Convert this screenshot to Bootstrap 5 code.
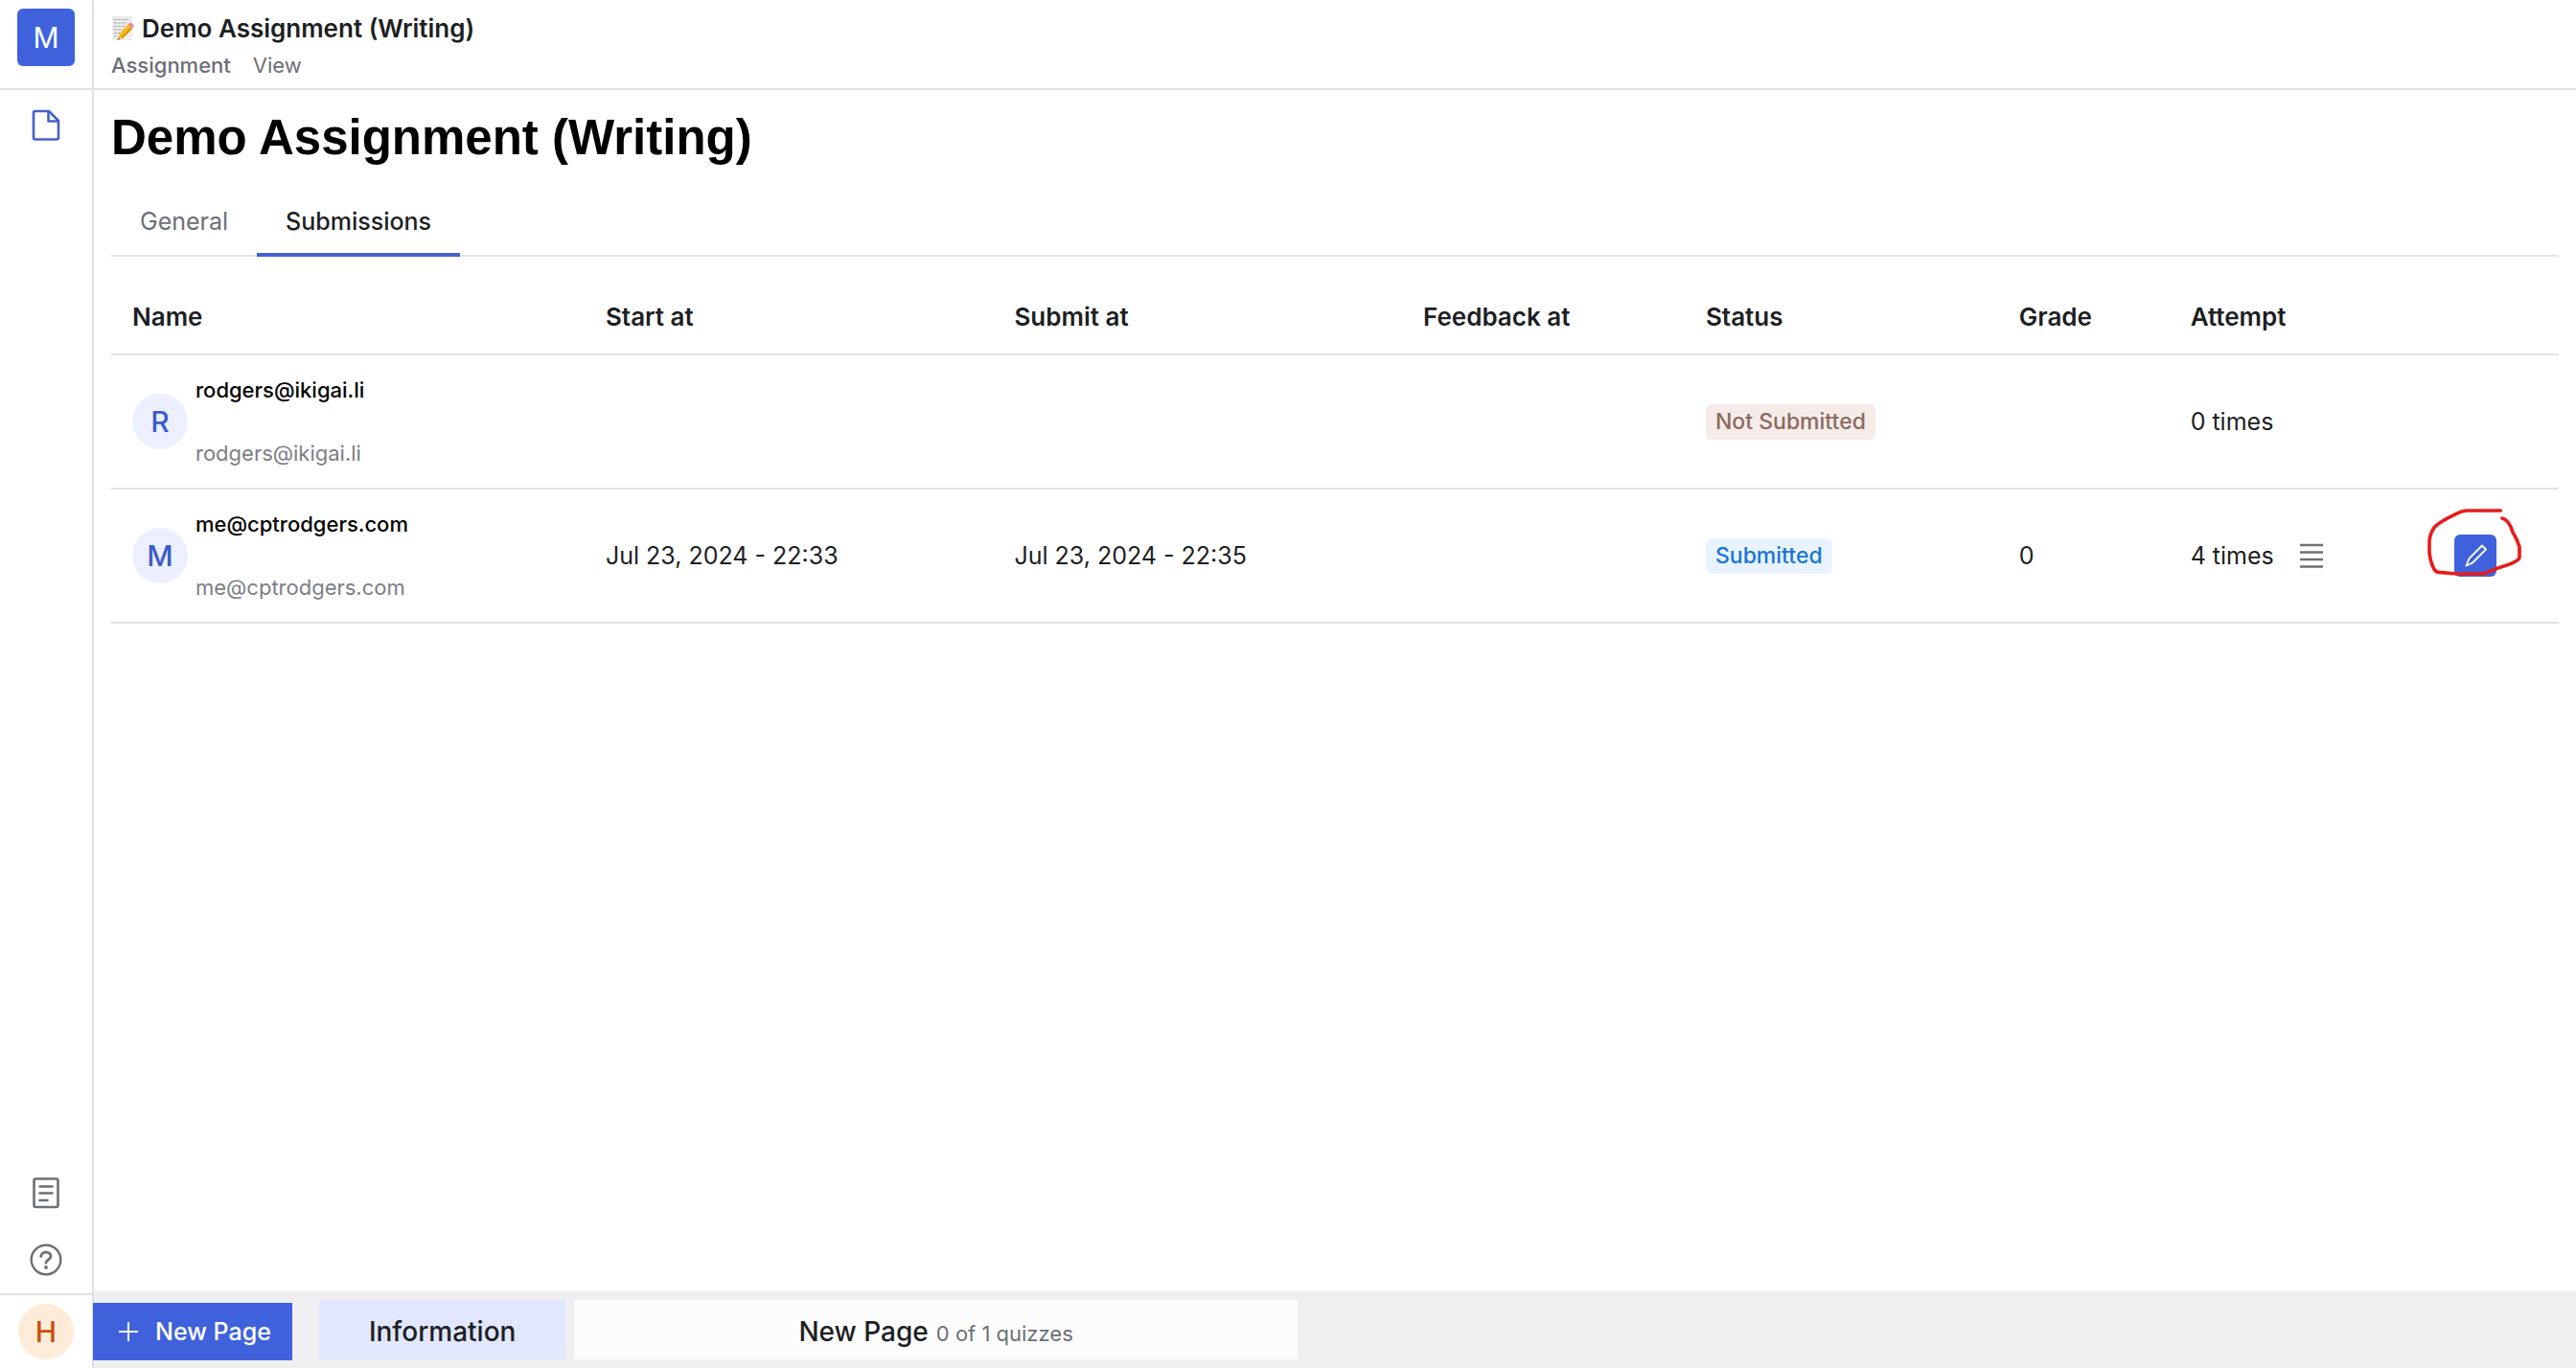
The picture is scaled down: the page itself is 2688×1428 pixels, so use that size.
<!DOCTYPE html>
<html lang="en">
<head>
<meta charset="utf-8">
<meta name="viewport" content="width=device-width, initial-scale=1">
<title>Demo Assignment (Writing)</title>
<link href="https://cdn.jsdelivr.net/npm/bootstrap@5.3.0/dist/css/bootstrap.min.css" rel="stylesheet">
<style>
  :root { --ink: #1c1f23; --muted-ink: #6b6f78; --line: #dfdfe6; --brand: #3f62dc; }
  body { font-family: Inter, "Noto Sans", sans-serif; font-size: 25px; line-height: 36px; color: var(--ink); background: #fff; }
  a { color: inherit; text-decoration: none; }
  svg { display: block; flex: none; }
  .side-rail { width: 98px; border-right: 2px solid var(--line); }
  .rail-head { height: 94px; padding-top: 9px; border-bottom: 2px solid var(--line); }
  .rail-foot { height: 78px; padding-top: 9px; border-top: 2px solid var(--line); }
  .rail-links { gap: 36px; padding-bottom: 18px; }
  .logo-tile, .user-dot { font-size: 30px; display: flex; align-items: center; justify-content: center; flex: none; }
  .logo-tile { width: 60px; height: 60px; background: var(--brand); color: #fff; border-radius: 6px; }
  .user-dot { width: 58px; height: 58px; border-radius: 50%; background: #ecf0fe; color: #3b5bcb; font-weight: 500; }
  .user-dot.warm { background: #feecd9; color: #cc4e0b; }
  .top-bar { height: 94px; padding: 12px 18px 0; border-bottom: 2px solid var(--line); }
  .doc-name { font-size: 26px; font-weight: 600; gap: 8px; }
  .doc-menu { font-size: 22px; line-height: 32px; gap: 23px; color: var(--muted-ink); padding-top: 4px; }
  .page-body { padding: 20px 18px 0; }
  h1 { font: bold 51px/60px "Liberation Sans", Arial, sans-serif; color: #000; margin: 0; }
  .nav-tabs { border-bottom: 2px solid #e4e5e8; margin: 20px 0 24px; --bs-nav-tabs-border-width: 0px; }
  .nav-tabs .nav-link { border: 0; border-bottom: 4px solid transparent; border-radius: 0; margin-bottom: -2px; padding: 21px 30px 17px; height: 74px; line-height: 32px; color: var(--muted-ink); }
  .nav-tabs .nav-link.active { color: var(--ink); font-weight: 500; border-bottom-color: #4562d0; background: none; }
  .table { table-layout: fixed; --bs-table-color: var(--ink); color: var(--ink); border-color: #e0e0e6; }
  .table > :not(caption) > * > * { padding: 0 22px; border-bottom: 2px solid #e2e2e8; vertical-align: middle; }
  .table th { height: 78px; font-size: 26px; font-weight: 600; }
  .table td { height: 140px; }
  .who { font-size: 22px; line-height: 32px; gap: 34px; }
  .who span:first-child { color: #000; font-weight: 500; }
  .who span:last-child { color: #7b7e87; }
  .tag { display: inline-block; font-size: 23px; line-height: 37px; padding: 0 10px; border-radius: 6px; font-weight: 500; }
  .tag-idle { background: #f5ece9; color: #8a6a60; }
  .tag-done { background: #e8f3ff; color: #1676d8; }
  .edit-btn { width: 44px; height: 44px; border: 0; border-radius: 6px; background: var(--brand); padding: 0; }
  .plain-btn { border: 0; background: none; padding: 0; color: #6b6f78; }
  .ring { position: absolute; left: -29px; top: -28px; pointer-events: none; }
  .page-strip { height: 80px; background: #efeff1; }
  .new-btn { height: 60px; background: var(--brand); color: #fff; border: 0; font-weight: 500; padding: 0 22px 0 26px; gap: 17px; margin: 4px 28px 0 -1px; }
  .page-tab { height: 62px; padding-top: 3px; font-size: 28px; background: #fcfcfc; font-weight: 500; gap: 8px; }
  .page-tab.current { background: #e0e7fe; margin-right: 9px; padding-left: 52px; padding-right: 52px; }
  .page-tab.wide { padding-left: 234px; padding-right: 234px; }
  .page-tab .count { font-size: 22px; font-weight: 400; color: var(--muted-ink); }
</style>
</head>
<body>
<div class="d-flex vh-100 overflow-hidden">
  <nav class="side-rail d-flex flex-column flex-shrink-0" aria-label="Workspace">
    <div class="rail-head d-flex justify-content-center"><a href="#" class="logo-tile">M</a></div>
    <div class="flex-grow-1 d-flex flex-column align-items-center pt-3">
      <a href="#" aria-label="Pages"><svg width="40" height="40" viewBox="0 0 40 40" fill="none" stroke="#4562c8" stroke-width="2.6" stroke-linejoin="round"><path d="M9 6H23L33 16V33.500q0 2-2 2H9q-2 0-2-2V8q0-2 2-2z"/><path d="M22.500 6V16.500H33"/></svg></a>
    </div>
    <div class="rail-links d-flex flex-column align-items-center">
      <a href="#" aria-label="Notes"><svg width="34" height="34" viewBox="0 0 34 34" fill="none" stroke="#6b6f78" stroke-width="2.6" stroke-linecap="round"><rect x="4.500" y="2.500" width="25" height="29.500" rx="2"/><path d="M10.500 10.500h13M10.500 17.500h13M10.500 25h8"/></svg></a>
      <a href="#" aria-label="Help"><svg width="34" height="34" viewBox="0 0 34 34" fill="none" stroke="#6b6f78" stroke-width="2.400" stroke-linecap="round"><circle cx="17" cy="17" r="15.300"/><path stroke-width="2.800" d="M11.800 13.500c.3-6 10.700-5.500 10.200.2-.3 3.300-5 3.300-5 6.600"/><circle cx="17" cy="25" r="1.900" fill="#6b6f78" stroke="none"/></svg></a>
    </div>
    <div class="rail-foot d-flex justify-content-center"><a href="#" class="user-dot warm">H</a></div>
  </nav>
  <div class="flex-grow-1 d-flex flex-column">
    <header class="top-bar">
      <div class="doc-name d-flex align-items-center">
        <svg width="24" height="28" viewBox="0 0 24 28"><path fill="#ececec" d="M1 1h21v25H1z"/><path stroke="#a8a8a8" stroke-width="1" stroke-dasharray="3 1" d="M3 4.500h16M3 8h13M3 11.500h12M3 15h9M3 18.500h6M3 22h4"/><path fill="#f5b921" d="M17.500 9.500l4.500 4.500L12 24l-5 1.500L8.500 19.500z"/><path fill="#d99510" d="M20.500 12.500L22 14 12 24l-1.500-1.500z"/><path fill="#ef8b93" d="M17.500 9.500l1.500-1.500q1-.8 2.500.2l1.800 1.800q.8 1 0 2L22 14z"/><path fill="#5b4a30" d="M7.500 23.500l-.8 2.300 2.300-.8z"/></svg>
        <span>Demo Assignment (Writing)</span>
      </div>
      <div class="doc-menu d-flex"><a href="#" class="fw-medium">Assignment</a><a href="#">View</a></div>
    </header>
    <main class="page-body flex-grow-1">
      <h1>Demo Assignment (Writing)</h1>
      <ul class="nav nav-tabs">
        <li class="nav-item"><a class="nav-link" href="#">General</a></li>
        <li class="nav-item"><a class="nav-link active" aria-current="page" href="#">Submissions</a></li>
      </ul>
      <table class="table mb-0">
        <colgroup><col style="width:19.340%"><col style="width:16.700%"><col style="width:16.700%"><col style="width:11.550%"><col style="width:12.800%"><col style="width:7%"><col style="width:10.780%"><col></colgroup>
        <thead><tr><th>Name</th><th>Start at</th><th>Submit at</th><th>Feedback at</th><th>Status</th><th>Grade</th><th>Attempt</th><th></th></tr></thead>
        <tbody>
          <tr>
            <td><div class="d-flex align-items-center"><span class="user-dot me-2">R</span><div class="who d-flex flex-column"><span>rodgers@ikigai.li</span><span>rodgers@ikigai.li</span></div></div></td>
            <td></td><td></td><td></td>
            <td><span class="tag tag-idle">Not Submitted</span></td>
            <td></td><td>0 times</td><td></td>
          </tr>
          <tr>
            <td><div class="d-flex align-items-center"><span class="user-dot me-2">M</span><div class="who d-flex flex-column"><span>me@cptrodgers.com</span><span>me@cptrodgers.com</span></div></div></td>
            <td>Jul 23, 2024 - 22:33</td><td>Jul 23, 2024 - 22:35</td><td></td>
            <td><span class="tag tag-done">Submitted</span></td>
            <td>0</td>
            <td><div class="d-flex align-items-center"><span>4 times</span><button type="button" class="plain-btn ms-4" aria-label="Attempts"><svg width="30" height="30" viewBox="0 0 30 30" stroke="#6b6f78" stroke-width="2.400"><path d="M3 4h24M3 11.500h24M3 19h24M3 26.500h24"/></svg></button></div></td>
            <td><div class="position-relative"><button type="button" class="edit-btn d-flex align-items-center justify-content-center" aria-label="Edit"><svg width="26" height="26" viewBox="0 0 26 26" fill="none" stroke="#fff" stroke-width="1.800" stroke-linejoin="round"><path d="M20 2.500l4 4L10 20.500 3.500 23.500 6.500 16z"/></svg></button>
              <svg class="ring" width="100" height="72" viewBox="95 90 300 216" fill="none" stroke="#e81c1c" stroke-width="11" stroke-linecap="round" stroke-linejoin="round"><path d="M327 99H220Q205 100 188 109C165 120 130 140 120 151Q105 172 104 195V232Q108 262 118 281Q124 292 134 292L190 297H268C290 294 310 280 330 275Q350 270 365 263Q386 252 386 246V212Q378 188 365 166Q352 127 332 123"/></svg></div></td>
          </tr>
        </tbody>
      </table>
    </main>
    <footer class="page-strip d-flex align-items-center">
      <button type="button" class="new-btn d-flex align-items-center"><svg width="22" height="22" viewBox="0 0 22 22" stroke="#fff" stroke-width="2"><path d="M11 1v20M1 11h20"/></svg>New Page</button>
      <a href="#" class="page-tab current d-flex align-items-center">Information</a>
      <a href="#" class="page-tab wide d-flex align-items-center"><span>New Page</span><span class="count pt-1">0 of 1 quizzes</span></a>
    </footer>
  </div>
</div>
<script src="https://cdn.jsdelivr.net/npm/bootstrap@5.3.0/dist/js/bootstrap.bundle.min.js"></script>
</body>
</html>
